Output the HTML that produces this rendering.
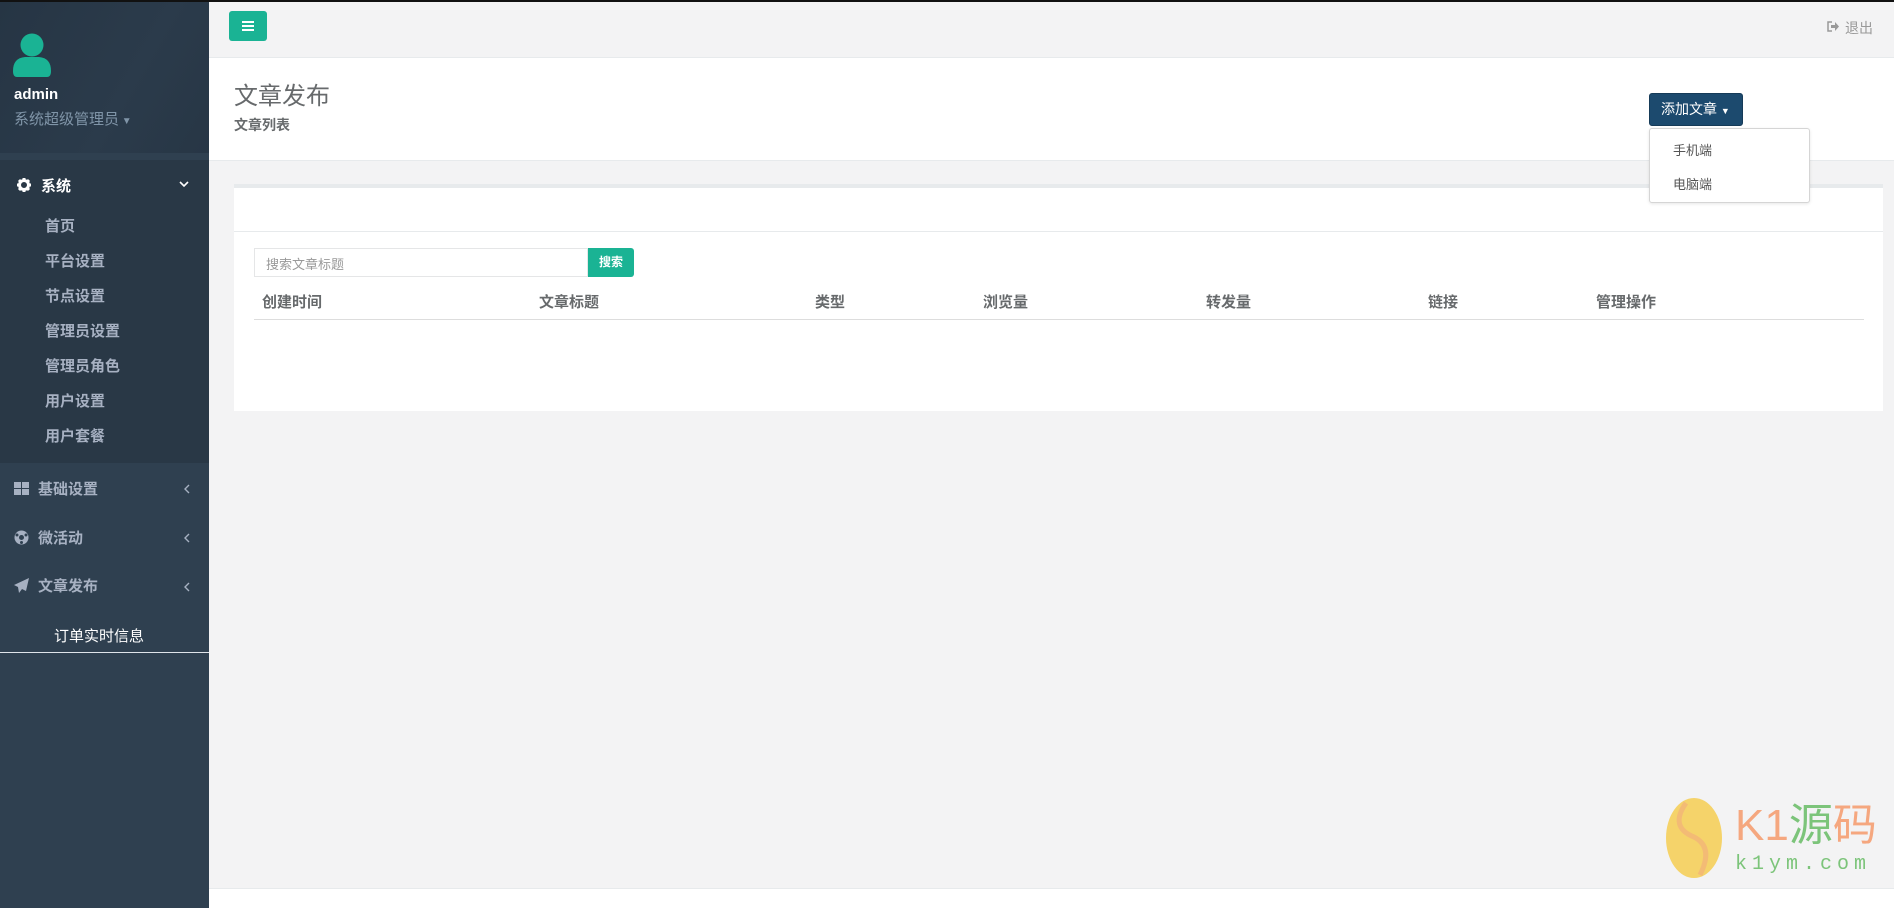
<!DOCTYPE html>
<html><head><meta charset="utf-8"><style>
*{margin:0;padding:0;box-sizing:border-box}
body{width:1894px;height:908px;overflow:hidden;background:#f3f3f4;font-family:"Liberation Sans","Noto Sans CJK SC",sans-serif;position:relative}
.abs{position:absolute}
#side{left:0;top:0;width:209px;height:908px;background:#2f4050}
.t{position:absolute;white-space:nowrap}
</style></head><body>
<div class="abs" style="left:0;top:0;width:1894px;height:2px;background:#111;z-index:5"></div>
<div id="side" class="abs">
 <div class="abs" style="left:0;top:0;width:209px;height:153px;background:linear-gradient(120deg,#263544,#2b3b4b 60%,#273645)"></div>
 <div class="abs" style="left:0;top:153px;width:209px;height:7px;background:#2f4050"></div>
 <svg class="abs" style="left:13px;top:33px" width="38" height="45" viewBox="0 0 38 45"><circle cx="19" cy="12" r="11.5" fill="#1ab394"/><path d="M0 38 Q0 25 12 24 L26 24 Q38 25 38 38 Q38 44 34 44 L4 44 Q0 44 0 38Z" fill="#1ab394"/></svg>
 <div class="t" style="left:14px;top:86px;color:#fff;font-weight:bold;font-size:15px">admin</div>
 <div class="t" style="left:14px;top:108px;color:#8095a8;font-size:15px">系统超级管理员<span style="font-size:10px"> ▼</span></div>
 <div class="abs" style="left:0;top:160px;width:209px;height:303px;background:#293846"></div>
 <svg class="abs" style="left:17px;top:178px" width="14" height="14" viewBox="0 0 14 14"><circle cx="7" cy="7" r="4.5" fill="none" stroke="#fff" stroke-width="3"/><g stroke="#fff" stroke-width="3"><path d="M7 0v3M7 11v3M0 7h3M11 7h3M2 2l2 2M10 10l2 2M2 12l2-2M10 4l2-2"/></g></svg>
 <div class="t" style="left:41px;top:175px;color:#fff;font-weight:bold;font-size:15px">系统</div>
 <svg class="abs" style="left:179px;top:181px" width="10" height="7"><path d="M1 1l4 4 4-4" stroke="#fff" stroke-width="1.6" fill="none"/></svg>
 <div style="position:absolute;left:45px;top:209px;color:#a7b1c2;font-size:15px;line-height:35px;font-weight:bold">首页<br>平台设置<br>节点设置<br>管理员设置<br>管理员角色<br>用户设置<br>用户套餐</div>
 <svg class="abs" style="left:14px;top:482px" width="15" height="13"><rect x="0" y="0" width="7" height="6" fill="#a7b1c2"/><rect x="8" y="0" width="7" height="6" fill="#a7b1c2"/><rect x="0" y="7" width="7" height="6" fill="#a7b1c2"/><rect x="8" y="7" width="7" height="6" fill="#a7b1c2"/></svg>
 <div class="t" style="left:38px;top:478px;color:#a7b1c2;font-weight:bold;font-size:15px">基础设置</div>
 <svg class="abs" style="left:184px;top:484px" width="6" height="10"><path d="M5 1L1 5l4 4" stroke="#a7b1c2" stroke-width="1.4" fill="none"/></svg>
 <svg class="abs" style="left:14px;top:530px" width="15" height="15"><circle cx="7.5" cy="7.5" r="7" fill="#a7b1c2"/><circle cx="7.5" cy="7.5" r="2.5" fill="#2f4050"/><circle cx="3" cy="5" r="1.5" fill="#2f4050"/><circle cx="12" cy="5" r="1.5" fill="#2f4050"/><circle cx="7.5" cy="12.5" r="1.5" fill="#2f4050"/></svg>
 <div class="t" style="left:38px;top:527px;color:#a7b1c2;font-weight:bold;font-size:15px">微活动</div>
 <svg class="abs" style="left:184px;top:533px" width="6" height="10"><path d="M5 1L1 5l4 4" stroke="#a7b1c2" stroke-width="1.4" fill="none"/></svg>
 <svg class="abs" style="left:14px;top:578px" width="15" height="15"><path d="M15 0L0 7l4 2 1 6 3-4 4 2z" fill="#a7b1c2"/></svg>
 <div class="t" style="left:38px;top:575px;color:#a7b1c2;font-weight:bold;font-size:15px">文章发布</div>
 <svg class="abs" style="left:184px;top:582px" width="6" height="10"><path d="M5 1L1 5l4 4" stroke="#a7b1c2" stroke-width="1.4" fill="none"/></svg>
 <div class="t" style="left:54px;top:625px;color:#fff;font-size:15px">订单实时信息</div>
 <div class="abs" style="left:0;top:652px;width:209px;height:1px;background:#dfe4ea"></div>
</div>
<div class="abs" style="left:209px;top:57px;width:1685px;height:1px;background:#e7eaec"></div>
<div class="abs" style="left:229px;top:11px;width:38px;height:30px;background:#1ab394;border-radius:3px"><div style="position:absolute;left:13px;top:10px;width:12px;height:2px;background:#fff;box-shadow:0 4px 0 #fff,0 8px 0 #fff"></div></div>
<svg class="abs" style="left:1827px;top:21px" width="12" height="11"><path d="M5 1H1v9h4" stroke="#999" stroke-width="1.5" fill="none"/><path d="M4 4h4V1l4 4.5L8 10V7H4z" fill="#999"/></svg>
<div class="t" style="left:1845px;top:18px;color:#999;font-size:14px">退出</div>
<div class="abs" style="left:209px;top:58px;width:1685px;height:103px;background:#fff;border-bottom:1px solid #e7eaec"></div>
<div class="t" style="left:234px;top:76px;color:#676a6c;font-size:24px">文章发布</div>
<div class="t" style="left:234px;top:115px;color:#676a6c;font-size:14px;font-weight:bold">文章列表</div>
<div class="abs" style="left:234px;top:184px;width:1649px;height:227px;background:#fff;border-top:4px solid #e7eaec"></div>
<div class="abs" style="left:234px;top:231px;width:1649px;height:1px;background:#e7eaec"></div>
<div class="abs" style="left:254px;top:248px;width:334px;height:29px;border:1px solid #e5e6e7;background:#fff"></div>
<div class="t" style="left:266px;top:254px;color:#999;font-size:13px">搜索文章标题</div>
<div class="abs" style="left:588px;top:248px;width:46px;height:29px;background:#1ab394;border-radius:0 3px 3px 0;color:#fff;font-size:12px;font-weight:bold;text-align:center;line-height:29px">搜索</div>
<div class="abs" style="left:254px;top:319px;width:1610px;height:1px;background:#ddd"></div>
<div style="position:absolute;top:291px;left:0;color:#676a6c;font-size:15px;font-weight:bold">
<span class="t" style="left:262px">创建时间</span><span class="t" style="left:539px">文章标题</span><span class="t" style="left:815px">类型</span><span class="t" style="left:983px">浏览量</span><span class="t" style="left:1206px">转发量</span><span class="t" style="left:1428px">链接</span><span class="t" style="left:1596px">管理操作</span></div>
<div class="abs" style="left:1649px;top:93px;width:94px;height:33px;background:#1c4a6e;border:1px solid #163b58;border-radius:3px;color:#fff;font-size:14px;line-height:31px;padding-left:11px">添加文章 <span style="font-size:9px">▼</span></div>
<div class="abs" style="left:1649px;top:128px;width:161px;height:75px;background:#fff;border:1px solid #d5d5d5;border-radius:3px;box-shadow:0 1px 3px rgba(0,0,0,.1)"></div>
<div class="t" style="left:1673px;top:140px;color:#555;font-size:13px">手机端</div>
<div class="t" style="left:1673px;top:174px;color:#555;font-size:13px">电脑端</div>
<div class="abs" style="left:209px;top:888px;width:1685px;height:20px;background:#fff;border-top:1px solid #e7eaec"></div>
<svg class="abs" style="left:1664px;top:797px" width="60" height="82"><ellipse cx="30" cy="41" rx="28" ry="40" fill="#f5d36a"/><path d="M22 6 Q5 30 30 40 Q50 50 36 78" stroke="#f2b07a" stroke-width="5" fill="none" opacity=".7"/></svg>
<div class="t" style="left:1735px;top:798px;font-size:44px;line-height:56px;color:#f5a77f;letter-spacing:0px">K1<span style="color:#7cc47a">源</span>码</div>
<div class="t" style="left:1735px;top:853px;font-size:20px;color:#7cc47a;letter-spacing:5px;font-family:'Liberation Mono',monospace">k1ym.com</div>
</body></html>
